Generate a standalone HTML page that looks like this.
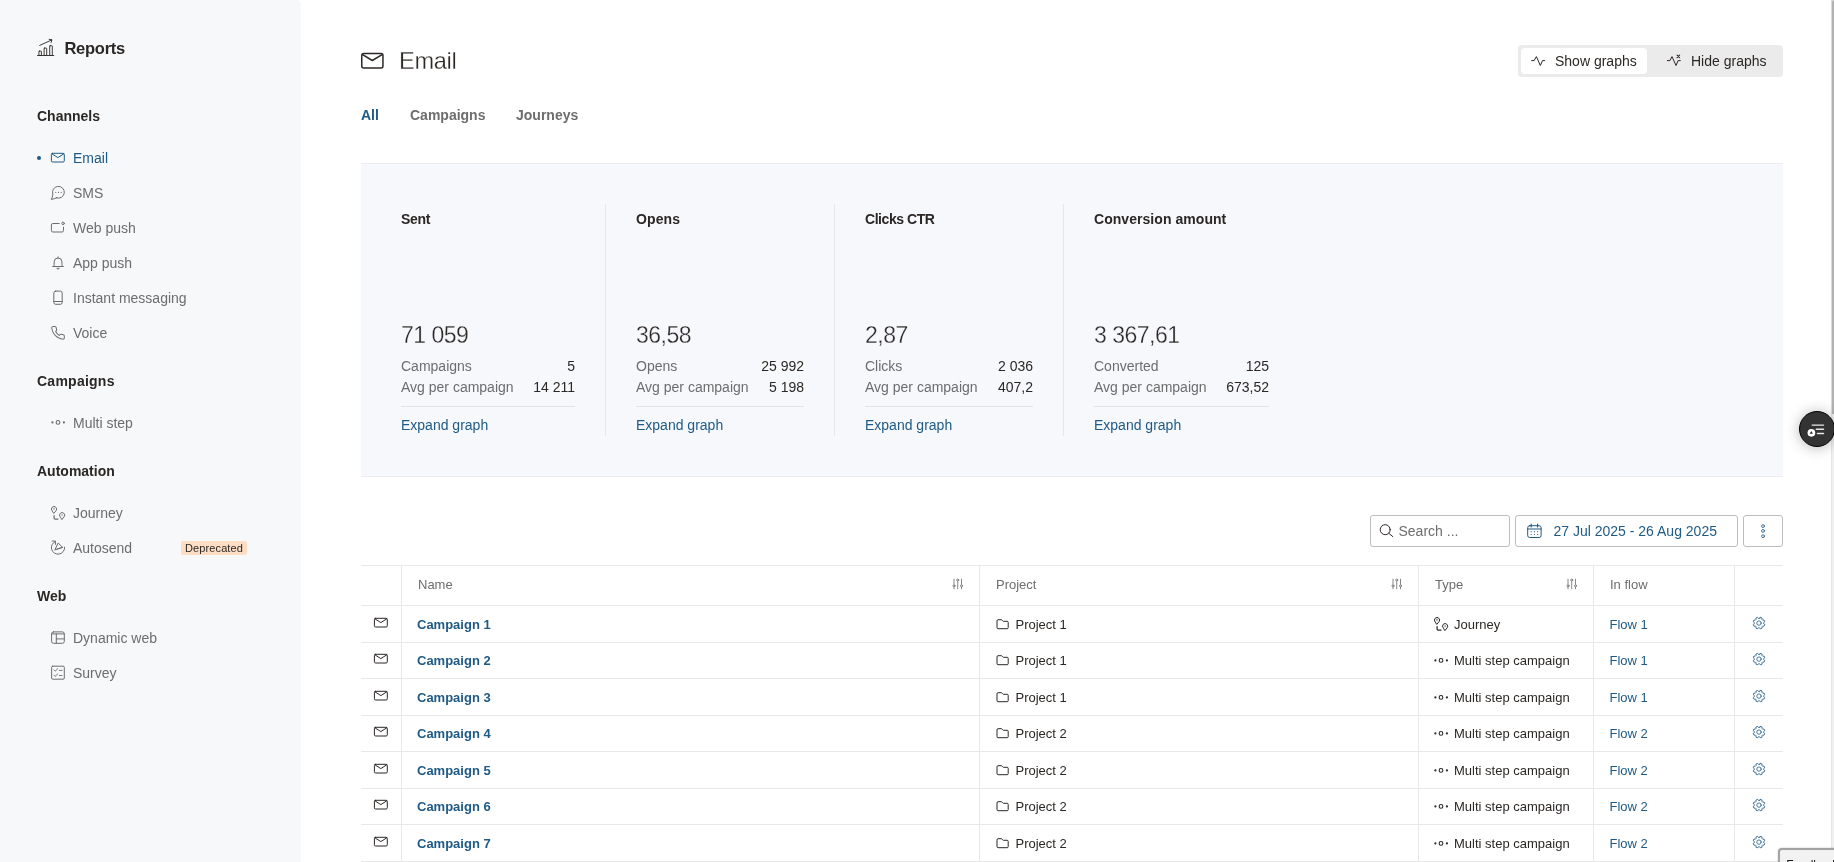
<!DOCTYPE html>
<html lang="en">
<head>
<meta charset="utf-8">
<title>Reports - Email</title>
<style>
*{box-sizing:border-box;margin:0;padding:0}
html,body{width:1834px;height:862px;overflow:hidden;background:#fff}
body{font-family:"Liberation Sans",sans-serif;font-size:14px;color:#2b2725;position:relative}
.abs{position:absolute}
#app{position:absolute;left:0;top:0;width:1834px;height:862px;overflow:hidden;will-change:transform;background:#fff}
svg{display:block;overflow:visible}
/* sidebar */
#side{position:absolute;left:0;top:0;width:300px;height:862px;background:#f7f8fa;border-top-right-radius:3px}
.hd{position:absolute;left:37px;font-weight:bold;font-size:14px;color:#2b2725;line-height:20px}
.it{position:absolute;left:73px;font-size:14px;color:#6d6d6d;line-height:20px;white-space:nowrap}
.it.act{color:#1e5a85}
/* main */
#title{-webkit-text-stroke:.3px #fff;position:absolute;left:399px;top:43px;letter-spacing:-.3px;font-size:23.600px;line-height:36px;color:#2b2725;font-weight:normal}
.tab{position:absolute;top:105px;font-weight:bold;font-size:14px;line-height:20px;color:#6d6d6d}
#panel{position:absolute;left:361px;top:163px;width:1422px;height:314px;background:#f7f8fc;border-top:1px solid #ececee;border-bottom:1px solid #ececee}
.col{position:absolute;top:0;height:314px}
.col h3{position:absolute;left:0;top:45px;font-size:14px;line-height:20px;font-weight:bold;white-space:nowrap;color:#2b2725}
.col .big{-webkit-text-stroke:.3px #f7f8fc;position:absolute;left:0;top:154px;font-size:23px;line-height:34px;letter-spacing:-.5px;white-space:nowrap;color:#2b2725}
.col .r{position:absolute;left:0;right:0;font-size:14px;line-height:20px;color:#6d6d6d;white-space:nowrap}
.col .r b{position:absolute;right:0;top:0;font-weight:normal;color:#2b2725}
.col .hr{position:absolute;left:0;right:0;top:242px;height:1px;background:#e3e4e8}
.col a{position:absolute;left:0;top:251px;font-size:14px;line-height:20px;color:#1e5a85;white-space:nowrap}
.vd{position:absolute;top:40px;width:1px;height:232px;background:#e6e7ea}
/* toolbar */
.box{position:absolute;top:515px;height:32px;border:1px solid #bdbdbd;border-radius:3px;background:#fff}
/* table */
.hl{position:absolute;left:361px;width:1422px;height:1px;background:#e8e8e8}
.vl{position:absolute;top:566px;width:1px;height:296px;background:#e8e8e8}
.th{position:absolute;top:575px;font-size:13px;line-height:20px;color:#6d6d6d}
.td{position:absolute;font-size:13px;line-height:20px;color:#2b2725;white-space:nowrap}
.td.l{color:#1e5a85}
.td.n{color:#1e5a85;font-weight:bold}
</style>
</head>
<body>
<div id="app">
<aside><nav>
<div id="side"></div><div class="abs" style="left:300px;top:2px;width:1px;height:860px;background:#f8f9fb"></div>
<svg class="abs" style="left:36px;top:38px" width="20" height="20" viewBox="36 38 20 20" fill="none" stroke="#2b2725" stroke-width="0.9" stroke-linecap="round" stroke-linejoin="round"><path d="M37.500 55.500H53.800"/><rect x="38.900" y="51.100" width="2.500" height="4.400" rx=".45"/><rect x="44.100" y="48.100" width="2.600" height="7.400" rx=".45"/><rect x="49.700" y="45.700" width="2.600" height="9.800" rx=".45"/><path d="M39.700 45.400L51.600 40"/><path d="M49.100 39.300L52 39.800L51.100 42.500"/></svg>
<div class="abs" style="left:64.400px;top:36px;font-size:16.500px;line-height:24px;font-weight:bold;letter-spacing:-.25px">Reports</div>
<div class="hd" style="top:106px;letter-spacing:0px">Channels</div>
<div class="abs" style="left:36.900px;top:155.800px;width:4.200px;height:4.200px;border-radius:50%;background:#1e5a85"></div>
<div class="abs" style="left:50px;top:150px;width:16px;height:16px;color:#1e5a85"><svg width="16" height="16" viewBox="0 0 16 16" fill="none" stroke="currentColor" stroke-width="1" stroke-linecap="round" stroke-linejoin="round" ><rect x="1.4" y="3.3" width="12.9" height="8.7" rx="1.2"/><path d="M1.9 3.8L7.85 7.6L13.8 3.8"/></svg></div>
<div class="it act" style="top:148px">Email</div>
<div class="abs" style="left:50px;top:185px;width:16px;height:16px;color:#6d6d6d"><svg width="16" height="16" viewBox="0 0 16 16" fill="none" stroke="currentColor" stroke-width="1" stroke-linecap="round" stroke-linejoin="round" ><path d="M6.380 12.840A5.900 5.900 0 1 0 2.860 9.320C2.700 11 2.200 13 1.300 14.400C3.200 14.200 5 13.600 6.380 12.840z"/><circle cx="5.800" cy="7.400" r=".55" fill="currentColor" stroke="none"/><circle cx="8.500" cy="7.400" r=".55" fill="currentColor" stroke="none"/><circle cx="11.200" cy="7.400" r=".55" fill="currentColor" stroke="none"/></svg></div>
<div class="it" style="top:183px">SMS</div>
<div class="abs" style="left:50px;top:220px;width:16px;height:16px;color:#6d6d6d"><svg width="16" height="16" viewBox="0 0 16 16" fill="none" stroke="currentColor" stroke-width="1" stroke-linecap="round" stroke-linejoin="round" ><path d="M9.200 3.500H2.900a1.500 1.500 0 0 0-1.500 1.500v5.500a1.500 1.500 0 0 0 1.500 1.500H12a1.500 1.500 0 0 0 1.500-1.500V7.200"/><circle cx="13.100" cy="3.400" r="1.250"/></svg></div>
<div class="it" style="top:218px">Web push</div>
<div class="abs" style="left:50px;top:255px;width:16px;height:16px;color:#6d6d6d"><svg width="16" height="16" viewBox="0 0 16 16" fill="none" stroke="currentColor" stroke-width="1" stroke-linecap="round" stroke-linejoin="round" ><path d="M2.800 11.500H13.300"/><path d="M3.900 11.500C4.300 10 4.150 8.500 4.150 6.900a3.900 3.900 0 0 1 7.800 0c0 1.600-.15 3.100.25 4.600"/><path d="M8.050 1.800v1.200"/><path d="M6.900 13.600a1.300 1.300 0 0 0 2.300 0z" fill="currentColor" stroke-width=".6"/></svg></div>
<div class="it" style="top:253px">App push</div>
<div class="abs" style="left:50px;top:290px;width:16px;height:16px;color:#6d6d6d"><svg width="16" height="16" viewBox="0 0 16 16" fill="none" stroke="currentColor" stroke-width="1" stroke-linecap="round" stroke-linejoin="round" ><rect x="3.800" y="1.100" width="8.400" height="13.200" rx="1.900"/><path d="M3.800 11.500h8.400"/></svg></div>
<div class="it" style="top:288px">Instant messaging</div>
<div class="abs" style="left:50px;top:325px;width:16px;height:16px;color:#6d6d6d"><svg width="16" height="16" viewBox="0 0 16 16" fill="none" stroke="currentColor" stroke-width="1" stroke-linecap="round" stroke-linejoin="round" ><g transform="translate(.44 .34) scale(.63)"><path stroke-width="1.590" d="M22 16.920v3a2 2 0 0 1-2.180 2 19.790 19.790 0 0 1-8.630-3.070 19.500 19.500 0 0 1-6-6 19.790 19.790 0 0 1-3.070-8.670A2 2 0 0 1 4.110 2h3a2 2 0 0 1 2 1.720 12.840 12.840 0 0 0 .7 2.810 2 2 0 0 1-.45 2.110L8.090 9.910a16 16 0 0 0 6 6l1.270-1.270a2 2 0 0 1 2.110-.45 12.840 12.840 0 0 0 2.810.7A2 2 0 0 1 22 16.920z"/></g></svg></div>
<div class="it" style="top:323px">Voice</div>
<div class="hd" style="top:371px;letter-spacing:0.25px">Campaigns</div>
<div class="abs" style="left:50px;top:415px;width:16px;height:16px;color:#6d6d6d"><svg width="16" height="16" viewBox="0 0 16 16" fill="none" stroke="currentColor" stroke-width="1" stroke-linecap="round" stroke-linejoin="round" ><circle cx="8" cy="7.400" r="1.850" stroke-width="1.100"/><circle cx="2.400" cy="7.400" r="1.100" fill="currentColor" stroke="none"/><circle cx="13.900" cy="7.400" r="1.100" fill="currentColor" stroke="none"/></svg></div>
<div class="it" style="top:413px">Multi step</div>
<div class="hd" style="top:461px;letter-spacing:0px">Automation</div>
<div class="abs" style="left:50px;top:505px;width:16px;height:16px;color:#6d6d6d"><svg width="16" height="16" viewBox="0 0 16 16" fill="none" stroke="currentColor" stroke-width="1" stroke-linecap="round" stroke-linejoin="round" ><g transform="translate(0 .4)"><path d="M2.020 5.390A2.600 2.600 0 1 1 5.980 5.390L4 7.700Z"/><path d="M3.400 3.500h1.200" stroke-width=".8"/><path d="M10.120 11.490A2.600 2.600 0 1 1 14.080 11.490L12.100 13.900Z"/><path d="M12.100 9.300v1" stroke-width=".8"/></g><path d="M4.100 10.500V13.100a1 1 0 0 0 1 1H8" stroke-width="1.250"/></svg></div>
<div class="it" style="top:503px">Journey</div>
<div class="abs" style="left:50px;top:540px;width:16px;height:16px;color:#6d6d6d"><svg width="16" height="16" viewBox="0 0 16 16" fill="none" stroke="currentColor" stroke-width="1" stroke-linecap="round" stroke-linejoin="round" ><path d="M5.590 1.320A6.650 6.650 0 1 0 14.690 7.150"/><path d="M2.100 1.050H5.450V4.400"/><path d="M8.400 3.300L12.700 7.400L5.200 9.900Z"/><path d="M12.700 7.400L6.900 8.900" stroke-width=".9"/></svg></div>
<div class="it" style="top:538px">Autosend</div>
<div class="abs" style="left:181px;top:541px;width:66px;height:14px;border-radius:2px;background:#fddec4;color:#2b2725;font-size:11px;line-height:14px;text-align:center;letter-spacing:.12px">Deprecated</div>
<div class="hd" style="top:586px;letter-spacing:0px">Web</div>
<div class="abs" style="left:50px;top:630px;width:16px;height:16px;color:#6d6d6d"><svg width="16" height="16" viewBox="0 0 16 16" fill="none" stroke="currentColor" stroke-width="1" stroke-linecap="round" stroke-linejoin="round" ><rect x="1.600" y="1.900" width="12.700" height="11.400" rx="1.900"/><path d="M1.600 3.900h12.700M6.300 3.900v9.400M6.300 8.900h8"/></svg></div>
<div class="it" style="top:628px">Dynamic web</div>
<div class="abs" style="left:50px;top:665px;width:16px;height:16px;color:#6d6d6d"><svg width="16" height="16" viewBox="0 0 16 16" fill="none" stroke="currentColor" stroke-width="1" stroke-linecap="round" stroke-linejoin="round" ><rect x="1.600" y="1.200" width="12.700" height="13" rx="1.100"/><path d="M3.800 4.900l1.300 1.300L7.700 3.700M3.800 10.100l1.300 1.300L7.700 8.900M9.300 5.400h2.700M9.300 10.500h2.700" stroke-width=".9"/></svg></div>
<div class="it" style="top:663px">Survey</div>
</nav></aside>
<main>
<header>
<svg class="abs" style="left:360px;top:51px" width="25" height="19" viewBox="360 51 25 19" fill="none" stroke="#2b2725" stroke-width="1.5" stroke-linecap="round" stroke-linejoin="round"><rect x="361.750" y="53.550" width="21.200" height="14.400" rx="2"/><path d="M362.600 54.600L372.300 60.500L382.100 54.600"/></svg>
<h1 id="title">Email</h1>
<div class="abs" style="left:1518px;top:45px;width:265px;height:32px;border-radius:4px;background:#ebebeb"></div>
<div class="abs" style="left:1521px;top:48px;width:126px;height:26px;border-radius:4px;background:#fff"></div>
<svg class="abs" style="left:1529px;top:52px" width="18" height="16" viewBox="1529 52 18 16" fill="none" stroke="#2b2725" stroke-width="1" stroke-linecap="round" stroke-linejoin="round"><path d="M1531.700 60.600H1534.100L1536.400 56.600L1540.300 65.500L1542.500 60.600H1544.700"/></svg>
<div class="abs" style="left:1555px;top:51px;font-size:14px;line-height:20px;color:#2b2725;white-space:nowrap">Show graphs</div>
<svg class="abs" style="left:1665px;top:52px" width="18" height="16" viewBox="1665 52 18 16" fill="none" stroke="#2b2725" stroke-width="1" stroke-linecap="round" stroke-linejoin="round"><path d="M1667.400 60.600H1669.900L1672 56.600L1676 65.500L1678.100 60.600H1680.300"/><path d="M1677.100 55.200L1679.600 57.700M1679.600 55.200L1677.100 57.700" stroke-width="1.100"/></svg>
<div class="abs" style="left:1691px;top:51px;font-size:14px;line-height:20px;color:#2b2725;white-space:nowrap">Hide graphs</div>
<div class="tab" style="left:361px;color:#1e5a85">All</div>
<div class="tab" style="left:410px">Campaigns</div>
<div class="tab" style="left:516px">Journeys</div>
</header>
<section>
<div id="panel">
<div class="col" style="left:40px;width:174px"><h3 style="letter-spacing:-0.3px">Sent</h3><div class="big">71 059</div><div class="r" style="top:192px">Campaigns<b>5</b></div><div class="r" style="top:213px">Avg per campaign<b>14 211</b></div><div class="hr"></div><a>Expand graph</a></div>
<div class="col" style="left:275px;width:168px"><h3 style="letter-spacing:0.1px">Opens</h3><div class="big">36,58</div><div class="r" style="top:192px">Opens<b>25 992</b></div><div class="r" style="top:213px">Avg per campaign<b>5 198</b></div><div class="hr"></div><a>Expand graph</a></div>
<div class="col" style="left:504px;width:168px"><h3 style="letter-spacing:-0.45px">Clicks CTR</h3><div class="big">2,87</div><div class="r" style="top:192px">Clicks<b>2 036</b></div><div class="r" style="top:213px">Avg per campaign<b>407,2</b></div><div class="hr"></div><a>Expand graph</a></div>
<div class="col" style="left:733px;width:175px"><h3 style="letter-spacing:0.05px">Conversion amount</h3><div class="big">3 367,61</div><div class="r" style="top:192px">Converted<b>125</b></div><div class="r" style="top:213px">Avg per campaign<b>673,52</b></div><div class="hr"></div><a>Expand graph</a></div>
<div class="vd" style="left:244px"></div>
<div class="vd" style="left:473px"></div>
<div class="vd" style="left:702px"></div>
</div>
</section>
<section>
<div class="box" style="left:1370px;width:140px"></div>
<div class="abs" style="left:1379px;top:523px;width:16px;height:16px;color:#2b2725"><svg width="16" height="16" viewBox="0 0 16 16" fill="none" stroke="currentColor" stroke-width="1" stroke-linecap="round" stroke-linejoin="round" ><circle cx="6.200" cy="6.700" r="5"/><path d="M9.800 10.300L13.800 13.600"/></svg></div>
<div class="abs" style="left:1398.500px;top:521px;font-size:14px;line-height:20px;color:#6d6d6d;white-space:nowrap">Search ...</div>
<div class="box" style="left:1515px;width:223px"></div>
<div class="abs" style="left:1526px;top:523px;width:16px;height:16px;color:#1e5a85"><svg width="16" height="16" viewBox="0 0 16 16" fill="none" stroke="currentColor" stroke-width="1" stroke-linecap="round" stroke-linejoin="round" ><rect x="1.700" y="2.700" width="13.400" height="11.800" rx="2"/><path d="M1.700 6h13.400M5.200 1v3M11.600 1v3" stroke-width="1.100"/><path d="M4.700 8.600h.9M7.950 8.600h.9M11.200 8.600h.9M4.700 11.500h.9M7.950 11.500h.9M11.200 11.500h.9" stroke-width="1.200" stroke-linecap="butt"/></svg></div>
<div class="abs" style="left:1553.500px;top:521px;font-size:14px;line-height:20px;color:#1e5a85;white-space:nowrap">27 Jul 2025 - 26 Aug 2025</div>
<div class="box" style="left:1743px;width:40px"></div>
<div class="abs" style="left:1755px;top:523px;width:16px;height:16px;color:#1e5a85"><svg width="16" height="16" viewBox="0 0 16 16" fill="none" stroke="currentColor" stroke-width="1" stroke-linecap="round" stroke-linejoin="round" ><circle cx="8" cy="3.100" r="1.450" stroke-width=".8"/><circle cx="8" cy="7.900" r="1.450" stroke-width=".8"/><circle cx="8" cy="13.200" r="1.450" stroke-width=".8"/></svg></div>
<div class="hl" style="top:565px"></div>
<div class="hl" style="top:605px"></div>
<div class="hl" style="top:642px"></div>
<div class="hl" style="top:678px"></div>
<div class="hl" style="top:715px"></div>
<div class="hl" style="top:751px"></div>
<div class="hl" style="top:788px"></div>
<div class="hl" style="top:824px"></div>
<div class="hl" style="top:861px"></div>
<div class="vl" style="left:401px"></div>
<div class="vl" style="left:979px"></div>
<div class="vl" style="left:1418px"></div>
<div class="vl" style="left:1593px"></div>
<div class="vl" style="left:1734px"></div>
<div class="th" style="left:418px">Name</div>
<div class="th" style="left:996px">Project</div>
<div class="th" style="left:1435px">Type</div>
<div class="th" style="left:1610px">In flow</div>
<div class="abs" style="left:950.5px;top:576.5px;width:16px;height:16px;color:#707070"><svg width="16" height="16" viewBox="0 0 16 16" fill="none" stroke="currentColor" stroke-width="1" stroke-linecap="round" stroke-linejoin="round" ><path d="M3 1.800V7.700M3 9.900V12.200M6.700 4.200V12.200M10.500 1.800V7.700M10.500 9.900V12.200" stroke-width=".85" stroke-linecap="butt"/><circle cx="3" cy="8.800" r="1" stroke-width=".9"/><circle cx="6.700" cy="3.100" r="1" stroke-width=".9"/><circle cx="10.500" cy="8.800" r="1" stroke-width=".9"/></svg></div>
<div class="abs" style="left:1389.5px;top:576.5px;width:16px;height:16px;color:#707070"><svg width="16" height="16" viewBox="0 0 16 16" fill="none" stroke="currentColor" stroke-width="1" stroke-linecap="round" stroke-linejoin="round" ><path d="M3 1.800V7.700M3 9.900V12.200M6.700 4.200V12.200M10.500 1.800V7.700M10.500 9.900V12.200" stroke-width=".85" stroke-linecap="butt"/><circle cx="3" cy="8.800" r="1" stroke-width=".9"/><circle cx="6.700" cy="3.100" r="1" stroke-width=".9"/><circle cx="10.500" cy="8.800" r="1" stroke-width=".9"/></svg></div>
<div class="abs" style="left:1564.5px;top:576.5px;width:16px;height:16px;color:#707070"><svg width="16" height="16" viewBox="0 0 16 16" fill="none" stroke="currentColor" stroke-width="1" stroke-linecap="round" stroke-linejoin="round" ><path d="M3 1.800V7.700M3 9.900V12.200M6.700 4.200V12.200M10.500 1.800V7.700M10.500 9.900V12.200" stroke-width=".85" stroke-linecap="butt"/><circle cx="3" cy="8.800" r="1" stroke-width=".9"/><circle cx="6.700" cy="3.100" r="1" stroke-width=".9"/><circle cx="10.500" cy="8.800" r="1" stroke-width=".9"/></svg></div>
<div class="abs" style="left:373px;top:615px;width:16px;height:16px;color:#2b2725"><svg width="16" height="16" viewBox="0 0 16 16" fill="none" stroke="currentColor" stroke-width="1" stroke-linecap="round" stroke-linejoin="round" ><rect x="1.4" y="3.3" width="12.9" height="8.7" rx="1.2"/><path d="M1.9 3.8L7.85 7.6L13.8 3.8"/></svg></div>
<div class="td n" style="left:417px;top:615px">Campaign 1</div>
<div class="abs" style="left:995.5px;top:616px;width:16px;height:16px;color:#2b2725"><svg width="16" height="16" viewBox="0 0 16 16" fill="none" stroke="currentColor" stroke-width="1" stroke-linecap="round" stroke-linejoin="round" ><path d="M1 4.700a1 1 0 0 1 1-1H5.400C6.400 3.700 6.500 5.300 7.500 5.300H11.200a1 1 0 0 1 1 1V11.700a1 1 0 0 1-1 1H2a1 1 0 0 1-1-1z"/></svg></div>
<div class="td" style="left:1015.500px;top:615px">Project 1</div>
<div class="abs" style="left:1432.8px;top:616px;width:16px;height:16px;color:#2b2725"><svg width="16" height="16" viewBox="0 0 16 16" fill="none" stroke="currentColor" stroke-width="1" stroke-linecap="round" stroke-linejoin="round" ><g transform="translate(0 .4)"><path d="M2.020 5.390A2.600 2.600 0 1 1 5.980 5.390L4 7.700Z"/><path d="M3.400 3.500h1.200" stroke-width=".8"/><path d="M10.120 11.490A2.600 2.600 0 1 1 14.080 11.490L12.100 13.900Z"/><path d="M12.100 9.300v1" stroke-width=".8"/></g><path d="M4.100 10.500V13.100a1 1 0 0 0 1 1H8" stroke-width="1.250"/></svg></div>
<div class="td" style="left:1454px;top:615px">Journey</div>
<div class="td l" style="left:1609.500px;top:615px">Flow 1</div>
<div class="abs" style="left:1751px;top:615px;width:16px;height:16px;color:#1e5a85"><svg width="16" height="16" viewBox="0 0 16 16" fill="none" stroke="currentColor" stroke-width="1" stroke-linecap="round" stroke-linejoin="round" ><circle cx="8" cy="8.100" r="2.200" stroke-width=".8"/><path stroke-width=".85" d="M9.38 2.36 L11.08 3.07 L10.94 4.43 L11.67 5.16 L13.03 5.02 L13.74 6.72 L12.67 7.58 L12.67 8.62 L13.74 9.48 L13.03 11.18 L11.67 11.04 L10.94 11.77 L11.08 13.13 L9.38 13.84 L8.52 12.77 L7.48 12.77 L6.62 13.84 L4.92 13.13 L5.06 11.77 L4.33 11.04 L2.97 11.18 L2.26 9.48 L3.33 8.62 L3.33 7.58 L2.26 6.72 L2.97 5.02 L4.33 5.16 L5.06 4.43 L4.92 3.07 L6.62 2.36 L7.48 3.43 L8.52 3.43Z"/></svg></div>
<div class="abs" style="left:373px;top:651px;width:16px;height:16px;color:#2b2725"><svg width="16" height="16" viewBox="0 0 16 16" fill="none" stroke="currentColor" stroke-width="1" stroke-linecap="round" stroke-linejoin="round" ><rect x="1.4" y="3.3" width="12.9" height="8.7" rx="1.2"/><path d="M1.9 3.8L7.85 7.6L13.8 3.8"/></svg></div>
<div class="td n" style="left:417px;top:651px">Campaign 2</div>
<div class="abs" style="left:995.5px;top:652px;width:16px;height:16px;color:#2b2725"><svg width="16" height="16" viewBox="0 0 16 16" fill="none" stroke="currentColor" stroke-width="1" stroke-linecap="round" stroke-linejoin="round" ><path d="M1 4.700a1 1 0 0 1 1-1H5.400C6.400 3.700 6.500 5.300 7.500 5.300H11.200a1 1 0 0 1 1 1V11.700a1 1 0 0 1-1 1H2a1 1 0 0 1-1-1z"/></svg></div>
<div class="td" style="left:1015.500px;top:651px">Project 1</div>
<div class="abs" style="left:1432.5px;top:653px;width:16px;height:16px;color:#2b2725"><svg width="16" height="16" viewBox="0 0 16 16" fill="none" stroke="currentColor" stroke-width="1" stroke-linecap="round" stroke-linejoin="round" ><circle cx="8" cy="7.400" r="1.850" stroke-width="1.100"/><circle cx="2.400" cy="7.400" r="1.100" fill="currentColor" stroke="none"/><circle cx="13.900" cy="7.400" r="1.100" fill="currentColor" stroke="none"/></svg></div>
<div class="td" style="left:1454px;top:651px">Multi step campaign</div>
<div class="td l" style="left:1609.500px;top:651px">Flow 1</div>
<div class="abs" style="left:1751px;top:651px;width:16px;height:16px;color:#1e5a85"><svg width="16" height="16" viewBox="0 0 16 16" fill="none" stroke="currentColor" stroke-width="1" stroke-linecap="round" stroke-linejoin="round" ><circle cx="8" cy="8.100" r="2.200" stroke-width=".8"/><path stroke-width=".85" d="M9.38 2.36 L11.08 3.07 L10.94 4.43 L11.67 5.16 L13.03 5.02 L13.74 6.72 L12.67 7.58 L12.67 8.62 L13.74 9.48 L13.03 11.18 L11.67 11.04 L10.94 11.77 L11.08 13.13 L9.38 13.84 L8.52 12.77 L7.48 12.77 L6.62 13.84 L4.92 13.13 L5.06 11.77 L4.33 11.04 L2.97 11.18 L2.26 9.48 L3.33 8.62 L3.33 7.58 L2.26 6.72 L2.97 5.02 L4.33 5.16 L5.06 4.43 L4.92 3.07 L6.62 2.36 L7.48 3.43 L8.52 3.43Z"/></svg></div>
<div class="abs" style="left:373px;top:688px;width:16px;height:16px;color:#2b2725"><svg width="16" height="16" viewBox="0 0 16 16" fill="none" stroke="currentColor" stroke-width="1" stroke-linecap="round" stroke-linejoin="round" ><rect x="1.4" y="3.3" width="12.9" height="8.7" rx="1.2"/><path d="M1.9 3.8L7.85 7.6L13.8 3.8"/></svg></div>
<div class="td n" style="left:417px;top:688px">Campaign 3</div>
<div class="abs" style="left:995.5px;top:689px;width:16px;height:16px;color:#2b2725"><svg width="16" height="16" viewBox="0 0 16 16" fill="none" stroke="currentColor" stroke-width="1" stroke-linecap="round" stroke-linejoin="round" ><path d="M1 4.700a1 1 0 0 1 1-1H5.400C6.400 3.700 6.500 5.300 7.500 5.300H11.200a1 1 0 0 1 1 1V11.700a1 1 0 0 1-1 1H2a1 1 0 0 1-1-1z"/></svg></div>
<div class="td" style="left:1015.500px;top:688px">Project 1</div>
<div class="abs" style="left:1432.5px;top:690px;width:16px;height:16px;color:#2b2725"><svg width="16" height="16" viewBox="0 0 16 16" fill="none" stroke="currentColor" stroke-width="1" stroke-linecap="round" stroke-linejoin="round" ><circle cx="8" cy="7.400" r="1.850" stroke-width="1.100"/><circle cx="2.400" cy="7.400" r="1.100" fill="currentColor" stroke="none"/><circle cx="13.900" cy="7.400" r="1.100" fill="currentColor" stroke="none"/></svg></div>
<div class="td" style="left:1454px;top:688px">Multi step campaign</div>
<div class="td l" style="left:1609.500px;top:688px">Flow 1</div>
<div class="abs" style="left:1751px;top:688px;width:16px;height:16px;color:#1e5a85"><svg width="16" height="16" viewBox="0 0 16 16" fill="none" stroke="currentColor" stroke-width="1" stroke-linecap="round" stroke-linejoin="round" ><circle cx="8" cy="8.100" r="2.200" stroke-width=".8"/><path stroke-width=".85" d="M9.38 2.36 L11.08 3.07 L10.94 4.43 L11.67 5.16 L13.03 5.02 L13.74 6.72 L12.67 7.58 L12.67 8.62 L13.74 9.48 L13.03 11.18 L11.67 11.04 L10.94 11.77 L11.08 13.13 L9.38 13.84 L8.52 12.77 L7.48 12.77 L6.62 13.84 L4.92 13.13 L5.06 11.77 L4.33 11.04 L2.97 11.18 L2.26 9.48 L3.33 8.62 L3.33 7.58 L2.26 6.72 L2.97 5.02 L4.33 5.16 L5.06 4.43 L4.92 3.07 L6.62 2.36 L7.48 3.43 L8.52 3.43Z"/></svg></div>
<div class="abs" style="left:373px;top:724px;width:16px;height:16px;color:#2b2725"><svg width="16" height="16" viewBox="0 0 16 16" fill="none" stroke="currentColor" stroke-width="1" stroke-linecap="round" stroke-linejoin="round" ><rect x="1.4" y="3.3" width="12.9" height="8.7" rx="1.2"/><path d="M1.9 3.8L7.85 7.6L13.8 3.8"/></svg></div>
<div class="td n" style="left:417px;top:724px">Campaign 4</div>
<div class="abs" style="left:995.5px;top:725px;width:16px;height:16px;color:#2b2725"><svg width="16" height="16" viewBox="0 0 16 16" fill="none" stroke="currentColor" stroke-width="1" stroke-linecap="round" stroke-linejoin="round" ><path d="M1 4.700a1 1 0 0 1 1-1H5.400C6.400 3.700 6.500 5.300 7.500 5.300H11.200a1 1 0 0 1 1 1V11.700a1 1 0 0 1-1 1H2a1 1 0 0 1-1-1z"/></svg></div>
<div class="td" style="left:1015.500px;top:724px">Project 2</div>
<div class="abs" style="left:1432.5px;top:726px;width:16px;height:16px;color:#2b2725"><svg width="16" height="16" viewBox="0 0 16 16" fill="none" stroke="currentColor" stroke-width="1" stroke-linecap="round" stroke-linejoin="round" ><circle cx="8" cy="7.400" r="1.850" stroke-width="1.100"/><circle cx="2.400" cy="7.400" r="1.100" fill="currentColor" stroke="none"/><circle cx="13.900" cy="7.400" r="1.100" fill="currentColor" stroke="none"/></svg></div>
<div class="td" style="left:1454px;top:724px">Multi step campaign</div>
<div class="td l" style="left:1609.500px;top:724px">Flow 2</div>
<div class="abs" style="left:1751px;top:724px;width:16px;height:16px;color:#1e5a85"><svg width="16" height="16" viewBox="0 0 16 16" fill="none" stroke="currentColor" stroke-width="1" stroke-linecap="round" stroke-linejoin="round" ><circle cx="8" cy="8.100" r="2.200" stroke-width=".8"/><path stroke-width=".85" d="M9.38 2.36 L11.08 3.07 L10.94 4.43 L11.67 5.16 L13.03 5.02 L13.74 6.72 L12.67 7.58 L12.67 8.62 L13.74 9.48 L13.03 11.18 L11.67 11.04 L10.94 11.77 L11.08 13.13 L9.38 13.84 L8.52 12.77 L7.48 12.77 L6.62 13.84 L4.92 13.13 L5.06 11.77 L4.33 11.04 L2.97 11.18 L2.26 9.48 L3.33 8.62 L3.33 7.58 L2.26 6.72 L2.97 5.02 L4.33 5.16 L5.06 4.43 L4.92 3.07 L6.62 2.36 L7.48 3.43 L8.52 3.43Z"/></svg></div>
<div class="abs" style="left:373px;top:761px;width:16px;height:16px;color:#2b2725"><svg width="16" height="16" viewBox="0 0 16 16" fill="none" stroke="currentColor" stroke-width="1" stroke-linecap="round" stroke-linejoin="round" ><rect x="1.4" y="3.3" width="12.9" height="8.7" rx="1.2"/><path d="M1.9 3.8L7.85 7.6L13.8 3.8"/></svg></div>
<div class="td n" style="left:417px;top:761px">Campaign 5</div>
<div class="abs" style="left:995.5px;top:762px;width:16px;height:16px;color:#2b2725"><svg width="16" height="16" viewBox="0 0 16 16" fill="none" stroke="currentColor" stroke-width="1" stroke-linecap="round" stroke-linejoin="round" ><path d="M1 4.700a1 1 0 0 1 1-1H5.400C6.400 3.700 6.500 5.300 7.500 5.300H11.200a1 1 0 0 1 1 1V11.700a1 1 0 0 1-1 1H2a1 1 0 0 1-1-1z"/></svg></div>
<div class="td" style="left:1015.500px;top:761px">Project 2</div>
<div class="abs" style="left:1432.5px;top:763px;width:16px;height:16px;color:#2b2725"><svg width="16" height="16" viewBox="0 0 16 16" fill="none" stroke="currentColor" stroke-width="1" stroke-linecap="round" stroke-linejoin="round" ><circle cx="8" cy="7.400" r="1.850" stroke-width="1.100"/><circle cx="2.400" cy="7.400" r="1.100" fill="currentColor" stroke="none"/><circle cx="13.900" cy="7.400" r="1.100" fill="currentColor" stroke="none"/></svg></div>
<div class="td" style="left:1454px;top:761px">Multi step campaign</div>
<div class="td l" style="left:1609.500px;top:761px">Flow 2</div>
<div class="abs" style="left:1751px;top:761px;width:16px;height:16px;color:#1e5a85"><svg width="16" height="16" viewBox="0 0 16 16" fill="none" stroke="currentColor" stroke-width="1" stroke-linecap="round" stroke-linejoin="round" ><circle cx="8" cy="8.100" r="2.200" stroke-width=".8"/><path stroke-width=".85" d="M9.38 2.36 L11.08 3.07 L10.94 4.43 L11.67 5.16 L13.03 5.02 L13.74 6.72 L12.67 7.58 L12.67 8.62 L13.74 9.48 L13.03 11.18 L11.67 11.04 L10.94 11.77 L11.08 13.13 L9.38 13.84 L8.52 12.77 L7.48 12.77 L6.62 13.84 L4.92 13.13 L5.06 11.77 L4.33 11.04 L2.97 11.18 L2.26 9.48 L3.33 8.62 L3.33 7.58 L2.26 6.72 L2.97 5.02 L4.33 5.16 L5.06 4.43 L4.92 3.07 L6.62 2.36 L7.48 3.43 L8.52 3.43Z"/></svg></div>
<div class="abs" style="left:373px;top:797px;width:16px;height:16px;color:#2b2725"><svg width="16" height="16" viewBox="0 0 16 16" fill="none" stroke="currentColor" stroke-width="1" stroke-linecap="round" stroke-linejoin="round" ><rect x="1.4" y="3.3" width="12.9" height="8.7" rx="1.2"/><path d="M1.9 3.8L7.85 7.6L13.8 3.8"/></svg></div>
<div class="td n" style="left:417px;top:797px">Campaign 6</div>
<div class="abs" style="left:995.5px;top:798px;width:16px;height:16px;color:#2b2725"><svg width="16" height="16" viewBox="0 0 16 16" fill="none" stroke="currentColor" stroke-width="1" stroke-linecap="round" stroke-linejoin="round" ><path d="M1 4.700a1 1 0 0 1 1-1H5.400C6.400 3.700 6.500 5.300 7.500 5.300H11.200a1 1 0 0 1 1 1V11.700a1 1 0 0 1-1 1H2a1 1 0 0 1-1-1z"/></svg></div>
<div class="td" style="left:1015.500px;top:797px">Project 2</div>
<div class="abs" style="left:1432.5px;top:799px;width:16px;height:16px;color:#2b2725"><svg width="16" height="16" viewBox="0 0 16 16" fill="none" stroke="currentColor" stroke-width="1" stroke-linecap="round" stroke-linejoin="round" ><circle cx="8" cy="7.400" r="1.850" stroke-width="1.100"/><circle cx="2.400" cy="7.400" r="1.100" fill="currentColor" stroke="none"/><circle cx="13.900" cy="7.400" r="1.100" fill="currentColor" stroke="none"/></svg></div>
<div class="td" style="left:1454px;top:797px">Multi step campaign</div>
<div class="td l" style="left:1609.500px;top:797px">Flow 2</div>
<div class="abs" style="left:1751px;top:797px;width:16px;height:16px;color:#1e5a85"><svg width="16" height="16" viewBox="0 0 16 16" fill="none" stroke="currentColor" stroke-width="1" stroke-linecap="round" stroke-linejoin="round" ><circle cx="8" cy="8.100" r="2.200" stroke-width=".8"/><path stroke-width=".85" d="M9.38 2.36 L11.08 3.07 L10.94 4.43 L11.67 5.16 L13.03 5.02 L13.74 6.72 L12.67 7.58 L12.67 8.62 L13.74 9.48 L13.03 11.18 L11.67 11.04 L10.94 11.77 L11.08 13.13 L9.38 13.84 L8.52 12.77 L7.48 12.77 L6.62 13.84 L4.92 13.13 L5.06 11.77 L4.33 11.04 L2.97 11.18 L2.26 9.48 L3.33 8.62 L3.33 7.58 L2.26 6.72 L2.97 5.02 L4.33 5.16 L5.06 4.43 L4.92 3.07 L6.62 2.36 L7.48 3.43 L8.52 3.43Z"/></svg></div>
<div class="abs" style="left:373px;top:834px;width:16px;height:16px;color:#2b2725"><svg width="16" height="16" viewBox="0 0 16 16" fill="none" stroke="currentColor" stroke-width="1" stroke-linecap="round" stroke-linejoin="round" ><rect x="1.4" y="3.3" width="12.9" height="8.7" rx="1.2"/><path d="M1.9 3.8L7.85 7.6L13.8 3.8"/></svg></div>
<div class="td n" style="left:417px;top:834px">Campaign 7</div>
<div class="abs" style="left:995.5px;top:835px;width:16px;height:16px;color:#2b2725"><svg width="16" height="16" viewBox="0 0 16 16" fill="none" stroke="currentColor" stroke-width="1" stroke-linecap="round" stroke-linejoin="round" ><path d="M1 4.700a1 1 0 0 1 1-1H5.400C6.400 3.700 6.500 5.300 7.500 5.300H11.200a1 1 0 0 1 1 1V11.700a1 1 0 0 1-1 1H2a1 1 0 0 1-1-1z"/></svg></div>
<div class="td" style="left:1015.500px;top:834px">Project 2</div>
<div class="abs" style="left:1432.5px;top:836px;width:16px;height:16px;color:#2b2725"><svg width="16" height="16" viewBox="0 0 16 16" fill="none" stroke="currentColor" stroke-width="1" stroke-linecap="round" stroke-linejoin="round" ><circle cx="8" cy="7.400" r="1.850" stroke-width="1.100"/><circle cx="2.400" cy="7.400" r="1.100" fill="currentColor" stroke="none"/><circle cx="13.900" cy="7.400" r="1.100" fill="currentColor" stroke="none"/></svg></div>
<div class="td" style="left:1454px;top:834px">Multi step campaign</div>
<div class="td l" style="left:1609.500px;top:834px">Flow 2</div>
<div class="abs" style="left:1751px;top:834px;width:16px;height:16px;color:#1e5a85"><svg width="16" height="16" viewBox="0 0 16 16" fill="none" stroke="currentColor" stroke-width="1" stroke-linecap="round" stroke-linejoin="round" ><circle cx="8" cy="8.100" r="2.200" stroke-width=".8"/><path stroke-width=".85" d="M9.38 2.36 L11.08 3.07 L10.94 4.43 L11.67 5.16 L13.03 5.02 L13.74 6.72 L12.67 7.58 L12.67 8.62 L13.74 9.48 L13.03 11.18 L11.67 11.04 L10.94 11.77 L11.08 13.13 L9.38 13.84 L8.52 12.77 L7.48 12.77 L6.62 13.84 L4.92 13.13 L5.06 11.77 L4.33 11.04 L2.97 11.18 L2.26 9.48 L3.33 8.62 L3.33 7.58 L2.26 6.72 L2.97 5.02 L4.33 5.16 L5.06 4.43 L4.92 3.07 L6.62 2.36 L7.48 3.43 L8.52 3.43Z"/></svg></div>
</section>
</main>
<div class="abs" style="left:1831px;top:0;width:3px;height:862px;background:#f0f0f0;border-left:1px solid #e6e6e6"></div>
<div class="abs" style="left:1831px;top:0;width:1px;height:414px;background:#d9d9d9;border-top-left-radius:3px"></div>
<div class="abs" style="left:1832px;top:0;width:2px;height:414px;background:#b2b2b2;border-top-left-radius:2px"></div>
<div class="abs" style="left:1799px;top:411px;width:36px;height:36px;border-radius:50%;background:#333;border:1px solid #000;box-shadow:0 1px 14px rgba(0,0,0,.28)"></div>
<svg class="abs" style="left:1805px;top:420px" width="22" height="20" viewBox="1805 420 22 20" fill="none" stroke="#e8e8e8" stroke-width="1.6" stroke-linecap="round" stroke-linejoin="round"><path d="M1812.200 425.100H1823.500M1816.300 429.300H1823.500M1817.500 433.500H1823.500" stroke-width="1.450"/><circle cx="1811.400" cy="432.800" r="3.850" fill="#fff" stroke="none"/><path d="M1811.300 431L1812.900 433.800H1809.700Z" fill="#222" stroke="none"/></svg>
<div class="abs" style="left:1778px;top:848px;width:62px;height:30px;background:#f2f2f2;border:2px solid #a3a3a3;border-radius:4px 0 0 0;box-shadow:0 0 2px rgba(0,0,0,.25)"></div>
<div class="abs" style="left:1786.300px;top:857.600px;font-size:12px;line-height:14px;color:#1a1a1a;white-space:nowrap;letter-spacing:-.1px">Feedback</div>
</div>
</body>
</html>
